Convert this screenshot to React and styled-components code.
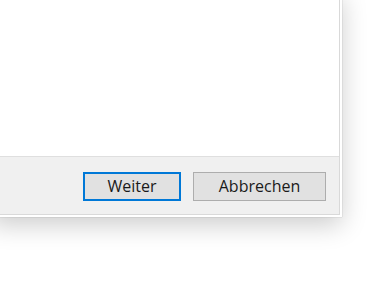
import React from 'react';
import styled, { createGlobalStyle } from 'styled-components';

export default function App(){
    return(
        <>
        <GlobalStyle/>
        <Window>
            <Inner>
                <Content/>
                <Footer>
                    <Button focused>Weiter</Button>
                    <Button wide>Abbrechen</Button>
                </Footer>
            </Inner>
        </Window>
        </>
    )
}

const GlobalStyle = createGlobalStyle`

html, body{
    height:100%;
}

body{
    margin:0;
    background-color:#fff;
    font-family: "Open Sans", "Noto Sans", sans-serif;
}

`

const Window = styled.div`

    margin:-10px 0 0 -10px;
    width:352px;
    box-sizing:border-box;
    padding:2px;
    background-color:#fff;
    box-shadow: 0 0 1px rgba(0,0,0,0.3), 0 8px 24px rgba(0,0,0,0.2);

`

const Inner = styled.div`

    display:flex;
    flex-direction:column;
    border:1px solid #d9d9d9;

`

const Content = styled.div`

    height:163px;
    background-color:#fff;

`

const Footer = styled.div`

    display:flex;
    justify-content:flex-end;
    gap:12px;
    padding:15px 13px 13px 0;
    background-color:#f0f0f0;
    border-top:1px solid #dfdfdf;

`

const Button = styled.button`

    width:${p => p.wide ? "133px" : "98px"};
    height:29px;
    box-sizing:border-box;
    background-color:#e1e1e1;
    border:${p => p.focused ? "2px solid #0078d7" : "1px solid #adadad"};
    font-family: "Open Sans", "Noto Sans", sans-serif;
    font-size:16px;
    color:#1a1a1a;
    padding:0 0 1px 0;
    display:flex;
    align-items:center;
    justify-content:center;

`
